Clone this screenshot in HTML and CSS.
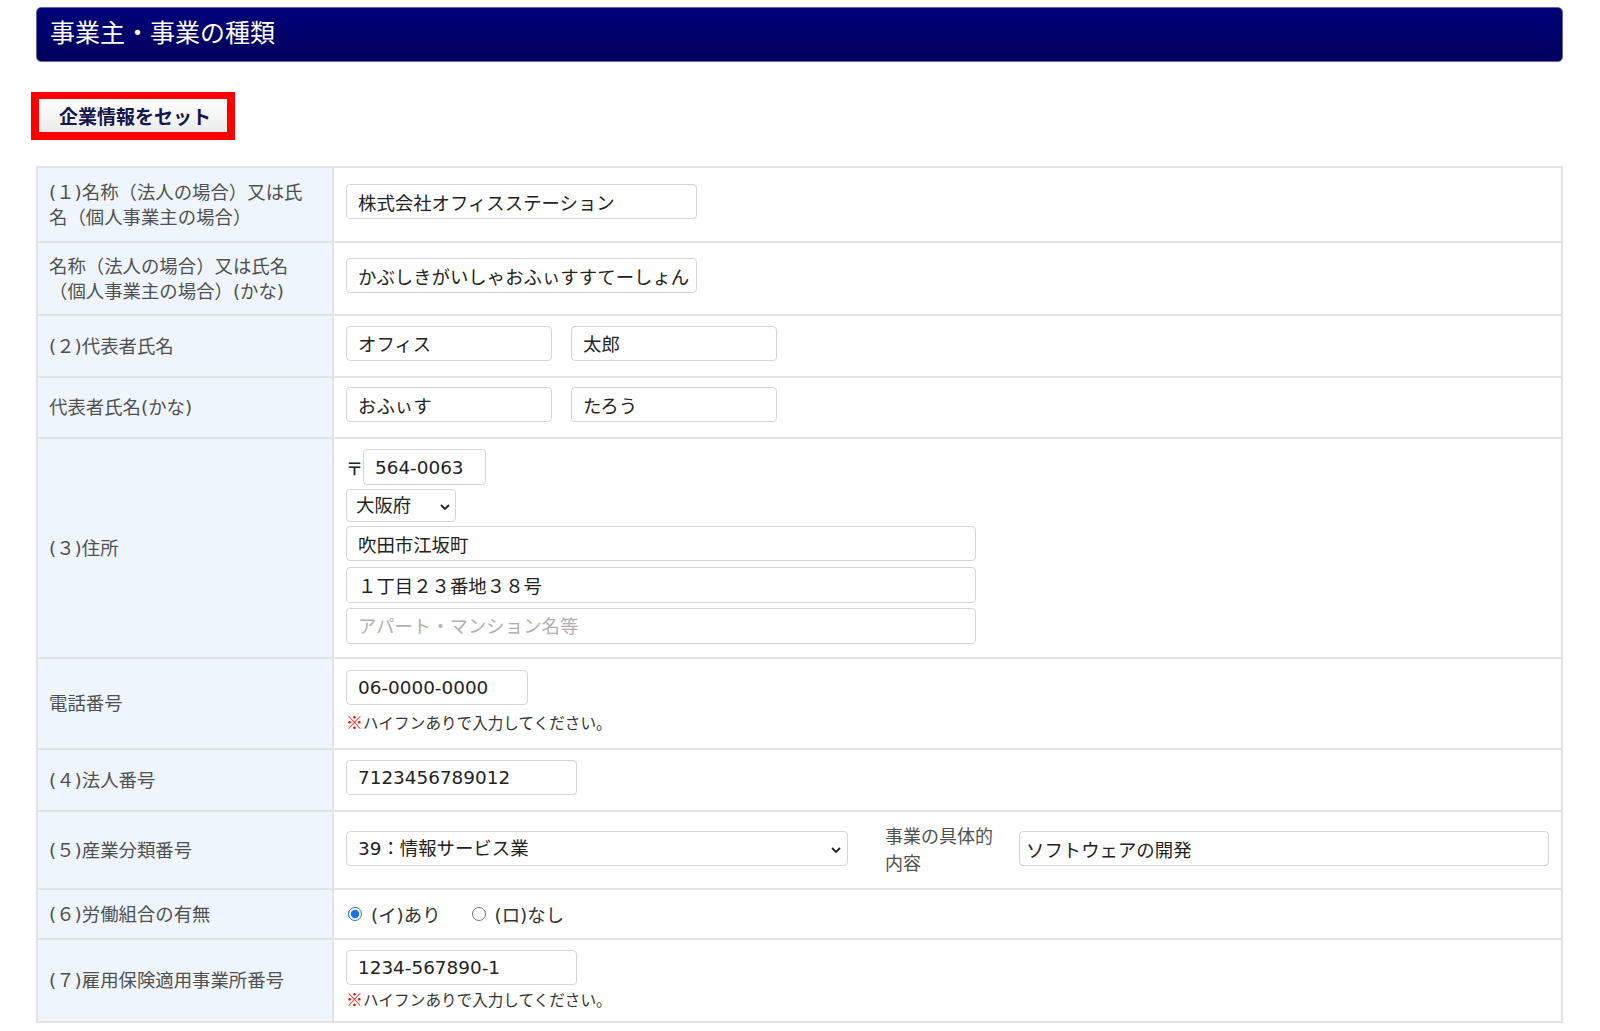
FILE: index.html
```html
<!DOCTYPE html>
<html lang="ja">
<head>
<meta charset="utf-8">
<title>事業主・事業の種類</title>
<link rel="stylesheet" href="styles.css">
</head>
<body>
<div class="page">
  <div class="title">事業主・事業の種類</div>
  <div class="btn-frame"><button class="set-btn" type="button">企業情報をセット</button></div>
  <table class="form">
    <colgroup><col class="c-label"><col></colgroup>
    <tr class="r1">
      <th>(１)名称（法人の場合）又は氏<br>名（個人事業主の場合）</th>
      <td class="lift"><input class="in w351" type="text" value="株式会社オフィスステーション"></td>
    </tr>
    <tr class="r2">
      <th>名称（法人の場合）又は氏名<br>（個人事業主の場合）(かな)</th>
      <td class="lift"><input class="in w351" type="text" value="かぶしきがいしゃおふぃすすてーしょん"></td>
    </tr>
    <tr class="r3">
      <th>(２)代表者氏名</th>
      <td class="lift"><div class="pair"><input class="in w206" type="text" value="オフィス"><input class="in w206" type="text" value="太郎"></div></td>
    </tr>
    <tr class="r4">
      <th>代表者氏名(かな)</th>
      <td class="lift"><div class="pair"><input class="in w206" type="text" value="おふぃす"><input class="in w206" type="text" value="たろう"></div></td>
    </tr>
    <tr class="r5">
      <th>(３)住所</th>
      <td class="addr">
        <div class="zip"><span class="zip-mark">〒</span><input class="in w123 h36" type="text" value="564-0063"></div>
        <div class="sel w110 h33"><select class="sel-in pad10"><option>大阪府</option></select><svg class="chev c-small" viewBox="0 0 10 6" width="10" height="6"><path d="M1 1 L5 5 L9 1" fill="none" stroke="#222" stroke-width="1.8"/></svg></div>
        <input class="in w630 a1" type="text" value="吹田市江坂町">
        <input class="in w630 a2 h36" type="text" value="１丁目２３番地３８号">
        <input class="in w630 a3 h36" type="text" placeholder="アパート・マンション名等">
      </td>
    </tr>
    <tr class="r6">
      <th>電話番号</th>
      <td class="noted n-phone">
        <input class="in w182" type="text" value="06-0000-0000">
        <div class="note"><span class="kome">※</span>ハイフンありで入力してください。</div>
      </td>
    </tr>
    <tr class="r7">
      <th>(４)法人番号</th>
      <td class="lift"><input class="in w231" type="text" value="7123456789012"></td>
    </tr>
    <tr class="r8">
      <th>(５)産業分類番号</th>
      <td>
        <div class="biz">
          <div class="sel w502 h35"><select class="sel-in pad12"><option>39：情報サービス業</option></select><svg class="chev" viewBox="0 0 10 6" width="10" height="6"><path d="M1 1 L5 5 L9 1" fill="none" stroke="#222" stroke-width="1.8"/></svg></div>
          <div class="biz-label">事業の具体的<br>内容</div>
          <input class="in biz-in" type="text" value="ソフトウェアの開発">
        </div>
      </td>
    </tr>
    <tr class="r9">
      <th>(６)労働組合の有無</th>
      <td>
        <div class="radios">
          <label class="rad"><input type="radio" name="union" checked>(イ)あり</label>
          <label class="rad"><input type="radio" name="union">(ロ)なし</label>
        </div>
      </td>
    </tr>
    <tr class="r10">
      <th>(７)雇用保険適用事業所番号</th>
      <td class="noted n-emp">
        <input class="in w231" type="text" value="1234-567890-1">
        <div class="note"><span class="kome">※</span>ハイフンありで入力してください。</div>
      </td>
    </tr>
  </table>
</div>
</body>
</html>
```

FILE: styles.css
```css
html, body {
  margin: 0;
  padding: 0;
  background: #fff;
}
body {
  font-family: "DejaVu Sans", "Noto Sans CJK JP", sans-serif;
  color: #333;
}
.page {
  padding: 7px 0 0 36px;
  width: 1527px;
}
.title {
  box-sizing: border-box;
  height: 55px;
  border-radius: 5px;
  border: 1px solid #6464a0;
  background: linear-gradient(#00007a, #00005c);
  color: #fff;
  font-family: "Noto Sans CJK JP", sans-serif;
  font-size: 25px;
  padding: 0 0 8px 13px;
  display: flex;
  align-items: center;
}
.btn-frame {
  display: inline-block;
  margin: 30px 0 0 -5px;
  border: 8px solid #ff0000;
  border-top-width: 7px;
  line-height: 0;
}
.set-btn {
  width: 188px;
  height: 33px;
  border: none;
  margin: 0;
  background: linear-gradient(#ffffff, #ebebeb);
  color: #15154f;
  font-family: "Noto Sans CJK JP", sans-serif;
  font-weight: 700;
  font-size: 19px;
  text-align: left;
  padding: 0 0 0 20px;
}
.form {
  margin-top: 26px;
  width: 1527px;
  border-collapse: collapse;
  border: 2px solid #e3e3e3;
}
.c-label { width: 298px; }
.form th {
  background: #eef5fd;
  border-right: 2px solid #dfe4ea;
  border-bottom: 2px solid #e3e3e3;
  text-align: left;
  vertical-align: middle;
  font-weight: 400;
  font-size: 18.4px;
  line-height: 25px;
  color: #505050;
  padding: 0 0 0 11px;
}
.form td {
  border-bottom: 2px solid #e3e3e3;
  vertical-align: middle;
  padding: 0 12px;
}
.r1 { height: 75px; }
.r2 { height: 73px; }
.r3 { height: 62px; }
.r4 { height: 61px; }
.r5 { height: 220px; }
.r6 { height: 91px; }
.r7 { height: 62px; }
.r8 { height: 78px; }
.r9 { height: 50px; }
.r10 { height: 83px; }

.in {
  box-sizing: border-box;
  display: block;
  height: 35px;
  border: 1px solid #d4d4d4;
  border-radius: 4px;
  padding: 0 0 0 11px;
  margin: 0;
  font-family: "DejaVu Sans", "Noto Sans CJK JP", sans-serif;
  font-size: 18.4px;
  color: #222;
  background: #fff;
  outline: none;
}
td.lift > .in,
td.lift > .pair { margin-bottom: 6px; }
.in::placeholder { color: #b0b0b0; }
.h36 { height: 36px; }
.w351 { width: 351px; }
.w206 { width: 206px; }
.w123 { width: 123px; }
.w630 { width: 630px; }
.w182 { width: 182px; }
.w231 { width: 231px; }

.pair {
  display: flex;
  gap: 19px;
}
.form td.addr {
  vertical-align: top;
  padding-top: 10px;
}
.zip {
  display: flex;
  align-items: center;
}
.zip-mark {
  font-family: "Noto Sans CJK JP", sans-serif;
  font-size: 17px;
  width: 17px;
  color: #222;
  font-weight: 500;
}
.addr .a1 { margin-top: 4px; }
.addr .a2 { margin-top: 6px; }
.addr .a3 { margin-top: 5px; }
.sel {
  position: relative;
  box-sizing: border-box;
}
.addr .sel { margin-top: 4px; }
.w110 { width: 110px; }
.w502 { width: 502px; flex: none; }
.h33 { height: 33px; }
.h35 { height: 35px; }
.sel-in {
  box-sizing: border-box;
  width: 100%;
  height: 100%;
  appearance: none;
  -webkit-appearance: none;
  border: 1px solid #d4d4d4;
  border-radius: 4px;
  background: #fff;
  font-family: "DejaVu Sans", "Noto Sans CJK JP", sans-serif;
  font-size: 18.4px;
  color: #222;
  margin: 0;
  outline: none;
}
.pad10 { padding: 0 0 0 9px; }
.pad12 { padding: 0 0 0 11px; }
.chev {
  position: absolute;
  right: 7px;
  top: 50%;
  margin-top: -2px;
  pointer-events: none;
}
.c-small { right: 6px; }

.form td.n-phone { vertical-align: top; padding-top: 11px; }
.form td.n-emp { vertical-align: top; padding-top: 10px; }
.note {
  font-family: "Noto Sans CJK JP", sans-serif;
  font-size: 15.6px;
  line-height: 20px;
  color: #333;
}
.n-phone .note { margin-top: 7px; }
.n-emp .note { margin-top: 4px; }
.kome { color: #ff0000; font-weight: 700; font-size: 17px; }

.biz {
  display: flex;
  align-items: center;
  margin-bottom: 3px;
}
.biz-label {
  margin-left: 37px;
  width: 118px;
  font-family: "Noto Sans CJK JP", sans-serif;
  font-size: 18px;
  line-height: 27px;
  color: #505050;
  flex: none;
}
.biz-in {
  margin-left: 16px;
  width: 530px;
  height: 35px;
  padding-left: 6px;
}

.radios {
  display: flex;
  gap: 29px;
  font-size: 18.4px;
  color: #333;
}
.rad {
  display: flex;
  align-items: center;
}
.rad input {
  width: 14px;
  height: 14px;
  margin: 0 9px 0 2px;
  accent-color: #1a73e8;
}
```
